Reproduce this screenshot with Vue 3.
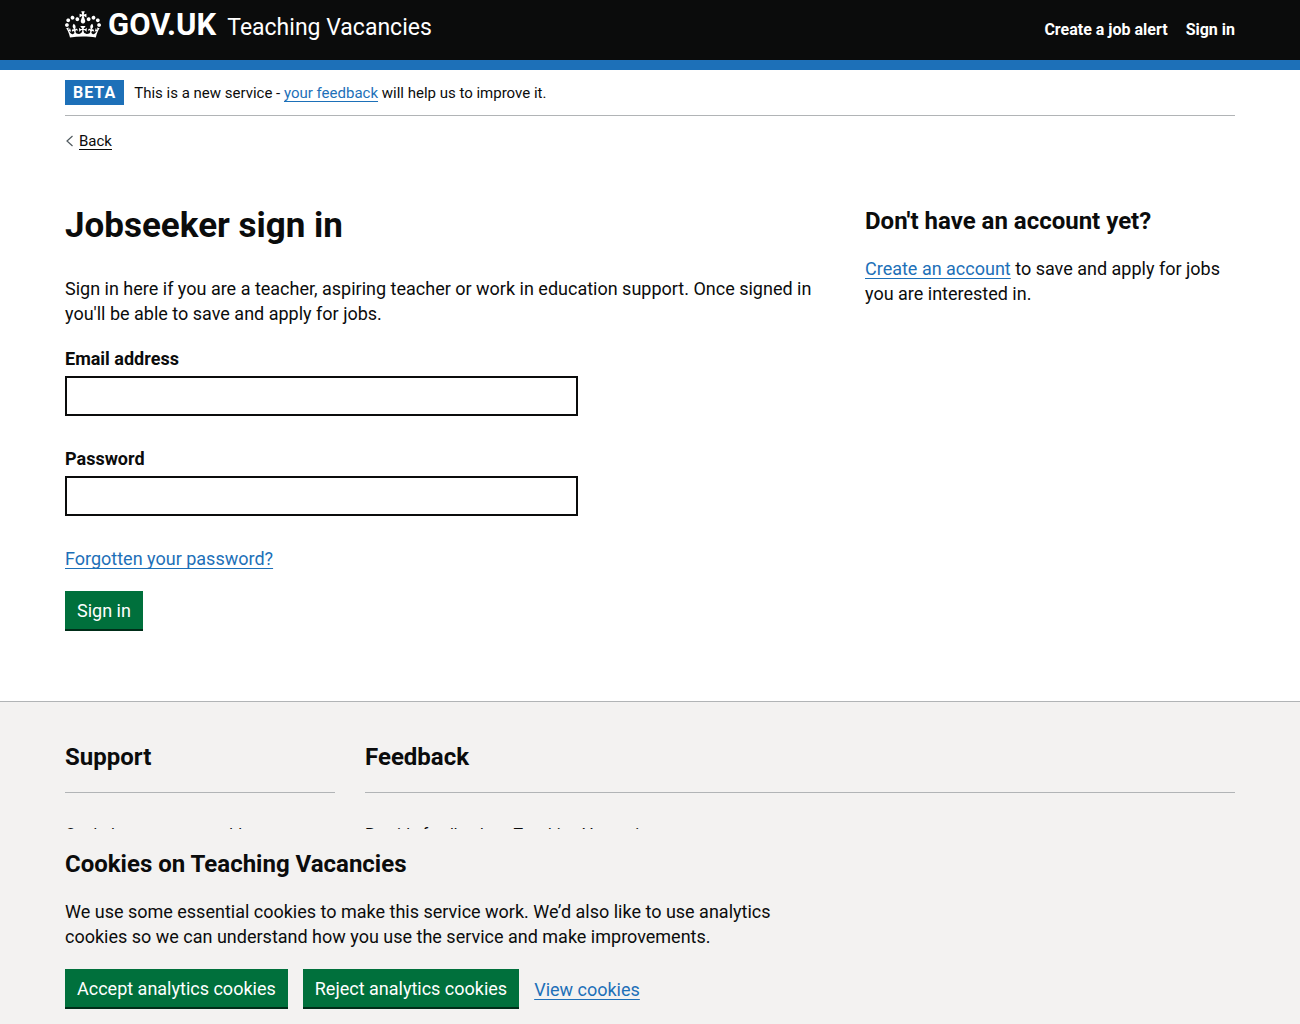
<script setup>
import { ref } from 'vue'

const email = ref('')
const password = ref('')
const navLinks = ['Create a job alert', 'Sign in']
</script>

<template>
  <div class="page">
    <header class="header">
      <div class="container header-inner">
        <a href="#" class="brand">
          <svg class="crown" viewBox="0 0 132 97" width="36" height="27" fill="currentColor" aria-hidden="true">
            <path d="M25 30.2c3.5 1.5 7.7-.2 9.1-3.7 1.5-3.6-.2-7.8-3.9-9.2-3.6-1.4-7.6.3-9.1 3.9-1.4 3.5.3 7.5 3.9 9zM9 39.5c3.6 1.5 7.8-.2 9.2-3.7 1.5-3.6-.2-7.8-3.9-9.1-3.6-1.5-7.6.2-9.1 3.8-1.4 3.5.3 7.5 3.8 9zM4.4 57.2c3.5 1.5 7.7-.2 9.1-3.8 1.5-3.6-.2-7.7-3.9-9.1-3.5-1.5-7.6.3-9.1 3.8-1.4 3.5.3 7.6 3.9 9.1zm38.3-21.4c3.5 1.5 7.7-.2 9.1-3.8 1.5-3.6-.2-7.7-3.9-9.1-3.6-1.5-7.6.3-9.1 3.8-1.3 3.6.4 7.7 3.9 9.1zm64.4-5.6c-3.6 1.5-7.8-.2-9.1-3.7-1.5-3.6.2-7.8 3.8-9.2 3.6-1.4 7.7.3 9.2 3.9 1.3 3.5-.4 7.5-3.9 9zm15.9 9.3c-3.6 1.5-7.7-.2-9.1-3.7-1.5-3.6.2-7.8 3.7-9.1 3.6-1.5 7.7.2 9.2 3.8 1.5 3.5-.3 7.5-3.8 9zm4.7 17.7c-3.6 1.5-7.8-.2-9.2-3.8-1.5-3.6.2-7.7 3.9-9.1 3.6-1.5 7.7.3 9.2 3.8 1.3 3.5-.4 7.6-3.9 9.1zM89.3 35.8c-3.6 1.5-7.8-.2-9.2-3.8-1.4-3.6.2-7.7 3.9-9.1 3.6-1.5 7.7.3 9.2 3.8 1.4 3.6-.3 7.7-3.9 9.1zM69.7 17.7l8.9 4.7V9.3l-8.9 2.8c-.2-.3-.5-.6-.9-.9L72.4 0H59.6l3.5 11.2c-.3.3-.6.5-.9.9l-8.8-2.8v13.1l8.8-4.7c.3.3.6.7.9.9l-5 15.4v.1c-.2.8-.4 1.6-.4 2.4 0 4.1 3.1 7.5 7 8.1h.2c.3 0 .7.1 1 .1.4 0 .7 0 1-.1h.2c4-.6 7.1-4.1 7.1-8.1 0-.8-.1-1.7-.4-2.4V34l-5.1-15.4c.4-.2.7-.6 1-.9zM66 92.8c16.9 0 32.8 1.1 47.1 3.2 4-16.9 8.9-26.7 14-33.5l-9.6-3.4c1 4.9 1.1 7.2 0 10.2-1.5-1.4-3-4.3-4.2-8.7L108.6 76c2.8-2 5-3.2 7.5-3.3-4.4 9.4-10 11.9-13.6 11.2-4.3-.8-6.3-4.6-5.6-7.9 1-4.7 5.7-5.9 8-.5 4.3-8.7-3-11.4-7.6-8.8 7.1-7.2 7.9-13.5 2.1-21.1-8 6.1-8.1 12.3-4.5 20.8-4.7-5.4-12.1-2.5-9.5 6.2 3.4-5.2 7.9-2 7.2 3.1-.6 4.3-6.4 7.8-13.5 7.2-10.3-.9-10.9-8-11.2-13.8 2.5-.5 7.1 1.8 11 7.3L80.2 60c-4.1 4.4-8 5.3-12.3 5.4 1.4-4.4 8-11.6 8-11.6H55.5s6.4 7.2 7.9 11.6c-4.2-.1-8-1-12.3-5.4l1.4 16.4c3.9-5.5 8.5-7.7 10.9-7.3-.3 5.8-.9 12.8-11.1 13.8-7.2.6-12.9-2.9-13.5-7.2-.7-5 3.8-8.3 7.1-3.1 2.7-8.7-4.6-11.6-9.4-6.2 3.7-8.5 3.6-14.7-4.6-20.8-5.8 7.6-5 13.9 2.2 21.1-4.7-2.6-11.9.1-7.7 8.8 2.3-5.5 7.1-4.2 8.1.5.7 3.3-1.3 7.1-5.7 7.9-3.5.7-9-1.8-13.5-11.2 2.5.1 4.7 1.3 7.5 3.3l-4.7-15.4c-1.2 4.4-2.7 7.2-4.3 8.7-1.1-3-.9-5.3 0-10.2l-9.5 3.4c5 6.9 9.9 16.7 14 33.5 14.8-2.1 30.8-3.2 47.7-3.2z" />
          </svg>
          <span class="logotype">GOV.UK</span>
          <span class="product">Teaching Vacancies</span>
        </a>
        <nav class="nav" aria-label="Main">
          <a v-for="link in navLinks" :key="link" href="#">{{ link }}</a>
        </nav>
      </div>
    </header>

    <div class="container">
      <div class="phase">
        <strong class="tag">BETA</strong>
        <span>This is a new service - <a href="#" class="link">your feedback</a> will help us to improve it.</span>
      </div>
      <a href="#" class="back">
        <svg width="8" height="12" viewBox="0 0 8 12" fill="none" stroke="#505a5f" stroke-width="1.2" aria-hidden="true">
          <path d="M7.5 1 2 6l5.5 5" />
        </svg>
        <span>Back</span>
      </a>

      <main class="main">
        <section>
          <h1>Jobseeker sign in</h1>
          <p class="intro">
            Sign in here if you are a teacher, aspiring teacher or work in education support. Once signed in
            you'll be able to save and apply for jobs.
          </p>
          <form @submit.prevent>
            <div class="field">
              <label for="email">Email address</label>
              <input id="email" v-model="email" type="email" autocomplete="email" />
            </div>
            <div class="field">
              <label for="password">Password</label>
              <input id="password" v-model="password" type="password" autocomplete="current-password" />
            </div>
            <p class="forgotten"><a href="#" class="link">Forgotten your password?</a></p>
            <button type="submit" class="button">Sign in</button>
          </form>
        </section>
        <aside class="aside">
          <h2>Don't have an account yet?</h2>
          <p><a href="#" class="link">Create an account</a> to save and apply for jobs you are interested in.</p>
        </aside>
      </main>
    </div>

    <footer class="footer">
      <div class="container footer-grid">
        <section>
          <h2>Support</h2>
          <a href="#">Get help or report a problem</a>
        </section>
        <section>
          <h2>Feedback</h2>
          <a href="#">Provide feedback on Teaching Vacancies</a>
        </section>
      </div>
    </footer>

    <div class="cookies" role="region" aria-label="Cookies on Teaching Vacancies">
      <div class="container">
        <h2>Cookies on Teaching Vacancies</h2>
        <p>
          We use some essential cookies to make this service work. We’d also like to use analytics
          cookies so we can understand how you use the service and make improvements.
        </p>
        <div class="actions">
          <button type="button" class="button">Accept analytics cookies</button>
          <button type="button" class="button">Reject analytics cookies</button>
          <a href="#" class="link">View cookies</a>
        </div>
      </div>
    </div>
  </div>
</template>

<style>
body {
  background: #f3f2f1;
}
</style>

<style scoped>
.page {
  box-sizing: border-box;
  display: flex;
  flex-direction: column;
  min-height: 100vh;
  background: #fff;
  color: #0b0c0c;
  font-family: Roboto, "Liberation Sans", sans-serif;
  font-size: 18px;
  line-height: 25px;
}
.container {
  box-sizing: border-box;
  width: 90%;
  margin: 0 auto;
}
h1,
h2,
p {
  margin: 0;
}
h1 {
  font-size: 35px;
  line-height: 40px;
}
h2 {
  font-size: 24px;
  line-height: 30px;
}
.link {
  color: #1d70b8;
  text-decoration: underline 1px;
  text-underline-offset: 3px;
  text-decoration-skip-ink: none;
}

.header {
  background: #0b0c0c;
  border-bottom: 10px solid #1d70b8;
}
.header-inner {
  display: flex;
  justify-content: space-between;
  height: 60px;
}
.header a {
  color: #fff;
  text-decoration: none;
}
.brand {
  display: flex;
  align-items: baseline;
  line-height: 50px;
}
.crown {
  align-self: flex-start;
  margin: 11px 7px 0 0;
}
.logotype {
  font-size: 31px;
  font-weight: 700;
}
.product {
  margin-left: 11px;
  font-size: 23px;
}
.nav {
  display: flex;
  gap: 18px;
  font-size: 16px;
  font-weight: 700;
  line-height: 60px;
}

.phase {
  display: flex;
  align-items: baseline;
  gap: 10px;
  padding: 10px 0 9px;
  border-bottom: 1px solid #b1b4b6;
  font-size: 15px;
}
.tag {
  padding: 0 8px;
  background: #1d70b8;
  color: #fff;
  font-size: 16px;
  letter-spacing: 1px;
}
.back {
  display: inline-flex;
  align-items: center;
  gap: 6px;
  margin-top: 15px;
  color: #0b0c0c;
  font-size: 15px;
  line-height: 20px;
  text-decoration: none;
}
.back span {
  text-decoration: underline 1px;
  text-underline-offset: 3px;
}

.main {
  display: grid;
  grid-template-columns: 770fr 370fr;
  gap: 30px;
  padding: 53px 0 70px;
}
.intro {
  margin-top: 30px;
}
.field {
  display: flex;
  flex-direction: column;
  gap: 5px;
  margin: 20px 0 30px;
}
.field + .field {
  margin-top: 30px;
}
.field label {
  font-weight: 700;
}
.field input {
  box-sizing: border-box;
  width: 66.6%;
  height: 40px;
  padding: 5px;
  border: 2px solid #0b0c0c;
  border-radius: 0;
  font: inherit;
}
.forgotten {
  margin-bottom: 20px;
}
.button {
  height: 40px;
  padding: 0 12px;
  border: 0;
  border-bottom: 2px solid #002d18;
  background: #00703c;
  color: #fff;
  font: inherit;
  cursor: pointer;
}
.aside p {
  margin-top: 20px;
}

.footer {
  flex: 1;
  padding-top: 40px;
  border-top: 1px solid #b1b4b6;
  background: #f3f2f1;
  font-size: 16px;
  line-height: 24px;
}
.footer-grid {
  display: grid;
  grid-template-columns: 270px 1fr;
  gap: 30px;
}
.footer h2 {
  margin-bottom: 30px;
  padding-bottom: 20px;
  border-bottom: 1px solid #b1b4b6;
}
.footer a {
  color: #0b0c0c;
}

.cookies {
  position: fixed;
  right: 0;
  bottom: 0;
  left: 0;
  padding: 20px 0 15px;
  background: #f3f2f1;
}
.cookies p {
  max-width: 770px;
  margin: 20px 0;
}
.actions {
  display: flex;
  align-items: center;
  gap: 15px;
}
</style>
